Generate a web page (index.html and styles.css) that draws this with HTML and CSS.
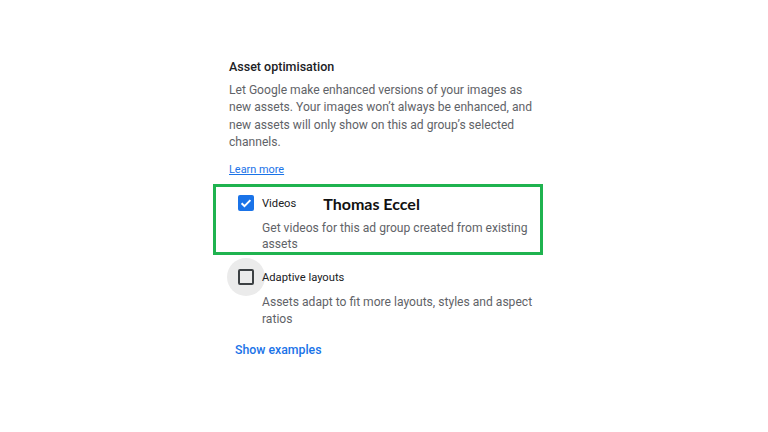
FILE: index.html
```html
<!DOCTYPE html>
<html>
<head>
<meta charset="utf-8">
<link rel="stylesheet" href="styles.css">
</head>
<body>
<div class="page">
  <div class="title">Asset optimisation</div>
  <p class="desc">Let Google make enhanced versions of your images as new assets. Your images won’t always be enhanced, and new assets will only show on this ad group’s selected channels.</p>
  <a class="learn" href="#">Learn more</a>
  <div class="option highlight">
    <div class="row">
      <span class="check checked"><svg width="16" height="16" viewBox="0 0 16 16"><path d="M3.6 8.2l2.9 2.9 5.9-6" fill="none" stroke="#fff" stroke-width="2"/></svg></span>
      <span class="label">Videos</span>
      <span class="name">Thomas Eccel</span>
    </div>
    <p class="opt-desc tight">Get videos for this ad group created from existing assets</p>
  </div>
  <div class="option plain">
    <div class="row">
      <span class="check unchecked"></span>
      <span class="label">Adaptive layouts</span>
    </div>
    <p class="opt-desc">Assets adapt to fit more layouts, styles and aspect ratios</p>
  </div>
  <a class="show" href="#">Show examples</a>
</div>
</body>
</html>
```
FILE: styles.css
```css
html, body { margin: 0; padding: 0; background: #fff; }
body { font-family: Roboto, "Liberation Sans", sans-serif; width: 768px; height: 432px; overflow: hidden; }
.page { padding: 58px 0 0 229px; display: flex; flex-direction: column; align-items: flex-start; }
.title { font-size: 12.5px; line-height: 18px; font-weight: 500; color: #202124; }
.desc { margin: 6px 0 0; width: 310px; font-size: 12.1px; line-height: 17.3px; color: #5f6368; }
.learn { margin-top: 10px; font-size: 10.9px; line-height: 18px; color: #1a73e8; text-decoration: underline; }
.option { display: flex; flex-direction: column; }
.highlight { margin: 5px 0 0 -16px; width: 330px; box-sizing: border-box; border: 3px solid #1fb34f; padding: 6px 0 0 22px; }
.plain { margin: 12px 0 0 9px; }
.row { display: flex; align-items: center; height: 20px; isolation: isolate; }
.check { width: 16px; height: 16px; box-sizing: border-box; border-radius: 2px; position: relative; flex: none; }
.check svg { display: block; }
.checked { background: #1a73e8; }
.unchecked { border: 2px solid #3c4043; }
.unchecked::before { content: ""; position: absolute; left: -13px; top: -13px; width: 38px; height: 38px; border-radius: 50%; background: #ebebeb; z-index: -1; }
.label { margin-left: 8px; font-size: 11.2px; color: #202124; }
.name { margin-left: 27px; font-family: Lato, "Open Sans", sans-serif; font-weight: 700; font-size: 16px; color: #111; }
.opt-desc { margin: 6.5px 0 0 24px; width: 280px; font-size: 12.1px; line-height: 17px; color: #5f6368; }
.opt-desc.tight { margin-top: 7px; line-height: 16px; }
.show { margin: 13.5px 0 0 6px; font-size: 12.3px; line-height: 18px; font-weight: 500; color: #1a73e8; text-decoration: none; }
```
